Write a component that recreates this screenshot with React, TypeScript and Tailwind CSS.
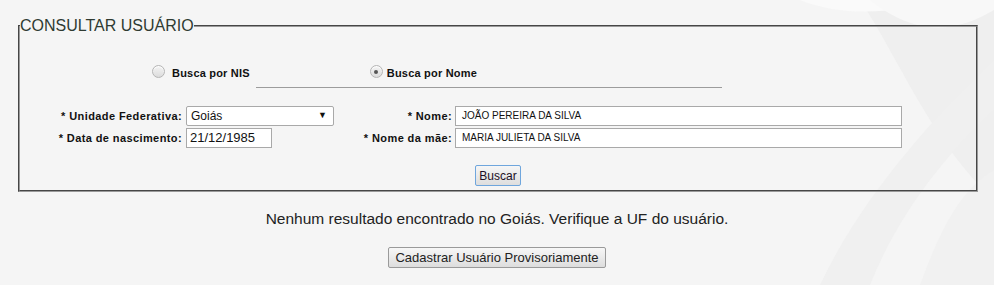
import React from 'react'

const labelCls = "text-right font-bold text-[11px] tracking-[0.4px] text-[#111] leading-[20px] whitespace-nowrap"
const inputCls = "h-[20px] border border-[#a9a9a9] bg-white px-[6px] text-[10px] text-[#111] leading-[18px] outline-none"

function Radio({ checked }: { checked?: boolean }) {
  return (
    <span className="relative inline-block w-[13px] h-[13px] rounded-full border border-[#b5b5b5] bg-[linear-gradient(#f4f4f4,#dcdcdc)] shadow-[inset_0_1px_1px_rgba(255,255,255,0.9)]">
      {checked && <span className="absolute left-[3.5px] top-[3.5px] w-[4px] h-[4px] rounded-full bg-[#555]" />}
    </span>
  )
}

function Backdrop() {
  return (
    <svg className="absolute inset-0 pointer-events-none" width="994" height="285" viewBox="0 0 994 285">
      <path d="M860 0 C 900 60, 930 140, 994 200 L 994 0 Z" fill="#efefef" />
      <path d="M800 0 C 850 20, 900 10, 960 0 Z" fill="#fafafa" />
      <path d="M994 60 C 930 120, 860 200, 820 285 L 870 285 C 900 210, 950 150, 994 110 Z" fill="#f0f0f0" />
      <path d="M994 170 C 960 190, 940 230, 920 285 L 994 285 Z" fill="#f1f1f1" />
      <path d="M870 0 C 920 40, 960 30, 994 10 L 994 0 Z" fill="#f8f8f8" />
    </svg>
  )
}

export default function App() {
  return (
    <div className="relative w-[994px] h-[285px] overflow-hidden bg-[#f5f5f5] font-['Liberation_Sans',Arial,sans-serif]">
      <Backdrop />
      <div className="relative pt-[16px]">
        <fieldset className="ml-[18px] w-[960px] border-2 [border-style:groove] border-[#9a9a9a] p-0 m-0 min-w-0">
          <legend className="p-0 ml-0 text-[16px] leading-[19px] text-[#2f3b32]">CONSULTAR USUÁRIO</legend>

          {/* tipo de busca */}
          <div className="mt-[30px] flex items-center h-[16px]">
            <span className="ml-[132px]"><Radio /></span>
            <span className="ml-[7px] font-bold text-[11px] tracking-[0.2px] text-[#111]">Busca por NIS</span>
            <span className="ml-[120px]"><Radio checked /></span>
            <span className="ml-[4px] font-bold text-[11px] tracking-[0.2px] text-[#111]">Busca por Nome</span>
          </div>
          <div className="ml-[236px] mt-[6px] w-[466px] h-px bg-[#9c9c9c]" />

          {/* campos */}
          <div className="mt-[18px] flex flex-col gap-[2px]">
            <div className="flex items-center">
              <span className={`${labelCls} w-[162px]`}>* Unidade Federativa:</span>
              <div className="ml-[4px] w-[148px] h-[20px] flex items-center justify-between border border-[#a9a9a9] rounded-[2px] bg-white pl-[4px] pr-[6px] text-[12px] text-[#111]">
                <span>Goiás</span>
                <span className="text-[9px]">▼</span>
              </div>
              <span className={`${labelCls} w-[118px]`}>* Nome:</span>
              <div className={`${inputCls} ml-[3px] w-[447px]`}>JOÃO PEREIRA DA SILVA</div>
            </div>
            <div className="flex items-center">
              <span className={`${labelCls} w-[162px]`}>* Data de nascimento:</span>
              <div className="ml-[4px] w-[86px] h-[20px] border border-[#a9a9a9] bg-white px-[3px] text-[13px] text-[#111] leading-[18px]">21/12/1985</div>
              <span className="w-[62px]" />
              <span className={`${labelCls} w-[118px]`}>* Nome da mãe:</span>
              <div className={`${inputCls} ml-[3px] w-[447px]`}>MARIA JULIETA DA SILVA</div>
            </div>
          </div>

          <div className="mt-[17px] mb-[4px] flex justify-center">
            <button className="h-[21px] px-[3px] border border-[#6fa6dd] rounded-[2px] bg-[linear-gradient(#f6f6f6,#dedede)] text-[12px] text-[#1b0f24] leading-[18px]">Buscar</button>
          </div>
        </fieldset>

        <p className="mt-[17px] text-center text-[15.5px] leading-[19px] text-[#222]">
          Nenhum resultado encontrado no Goiás. Verifique a UF do usuário.
        </p>

        <div className="mt-[19px] flex justify-center">
          <button className="h-[21px] w-[218px] border border-[#9a9a9a] rounded-[2px] bg-[linear-gradient(#f7f7f7,#dddddd)] text-[13px] text-[#222] leading-[19px]">
            Cadastrar Usuário Provisoriamente
          </button>
        </div>
      </div>
    </div>
  )
}
